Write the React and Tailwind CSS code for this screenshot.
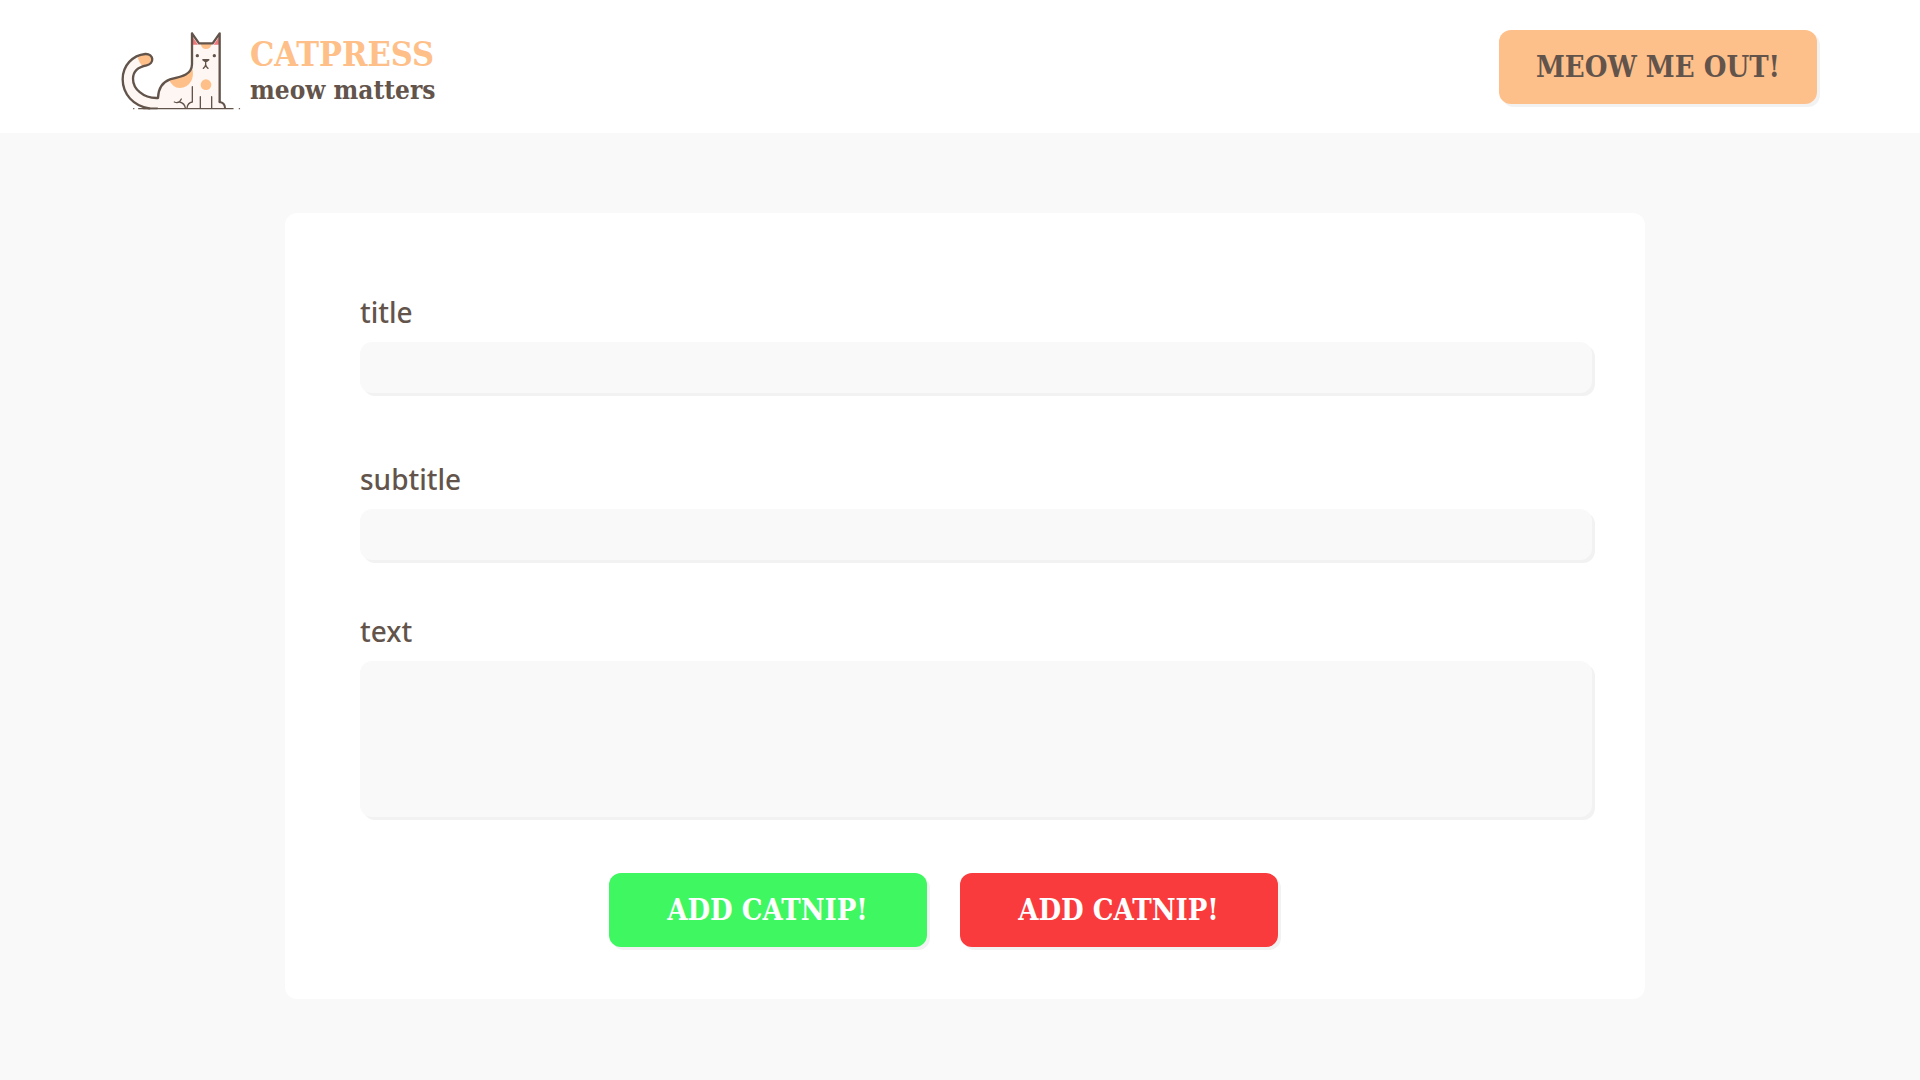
const slab = "font-['DejaVu_Serif_Condensed','DejaVu_Serif',serif] font-bold";
const field =
  "block w-full rounded-xl bg-[#f9f9f9] px-4 text-2xl text-[#63544b] shadow-[3px_3px_0_#f2f2f2] outline-none";
const label = "text-[28px] leading-10 font-medium text-[#63544b]";
const button =
  "h-[74px] w-[318px] rounded-xl text-[29px] leading-10 shadow-[3px_3px_0_#f2f2f2] cursor-pointer";

function CatLogo() {
  return (
    <svg viewBox="30 30 366 246" className="h-[82px] w-[122px] shrink-0" fill="none" aria-hidden="true">
      <path
        d="M246 40 L267 69 H308 L329 40 V244 Q345 247 346 265 H110 C66 256 38 222 38 178 C38 136 68 106 106 102 C132 101 134 130 112 136 C84 140 69 155 69 176 C69 205 98 234 144 234 C145 204 158 186 180 177 C210 170 246 166 246 130 Z"
        fill="#fdf6f3"
      />
      <path d="M83 113 Q100 102 108 102 C130 103 131 126 114 134 L97 139 Q88 128 83 113 Z" fill="#fec088" />
      <path d="M177 179 Q208 173 225 166 Q242 157 247 146 Q252 165 244 182 Q233 203 209 204 Q188 203 177 179 Z" fill="#fec088" />
      <path d="M272 72 H305 Q302 87 288 87 Q275 87 272 72 Z" fill="#fec088" />
      <circle cx="288" cy="194" r="16" fill="#fec088" />
      <path d="M248 51 L264 74 H248 Z M327 51 L311 74 H327 Z" fill="#f0787c" />
      <g stroke="#63544b" strokeLinejoin="round" strokeLinecap="round">
        <path
          strokeWidth="7"
          d="M329 246 V40 L308 70 H267 L246 40 V132 C246 164 216 170 180 178 C158 186 145 204 144 234 C98 236 69 205 69 176 C69 155 84 141 110 136 C134 131 132 101 106 102 C68 106 38 136 38 178 C38 222 70 258 118 265"
        />
        <path strokeWidth="6" d="M329 246 Q344 248 345 263" />
        <path strokeWidth="4" d="M86 266 H369" />
        <path strokeWidth="5" d="M100 265 H142" />
        <path strokeWidth="4" d="M71 266 h0.5 M388 266 h0.5" />
        <path strokeWidth="4" d="M271 230 V264 M305 230 V264 M247 200 V246 Q233 248 231 264 M193 246 Q202 250 209 245 L214 237 M209 246 Q224 250 226 264" />
        <path strokeWidth="4" d="M287 122 V135 M280 145 Q286 141 287 134 Q288 141 294 145" />
      </g>
      <path d="M277 117 H298 V121 L291 126 H284 L277 121 Z" fill="#63544b" />
      <circle cx="262" cy="107" r="5" fill="#63544b" />
      <circle cx="313" cy="107" r="5" fill="#63544b" />
    </svg>
  );
}

export default function App() {
  return (
    <div className="flex min-h-screen flex-col bg-[#f9f9f9] font-['Noto_Sans','Open_Sans',sans-serif]">
      <header className="flex min-h-[133px] items-start justify-between bg-white pt-[30px] pr-[103px] pl-[120px]">
        <a href="#" className="flex items-start gap-2">
          <CatLogo />
          <span className={`flex flex-col pt-1 ${slab}`}>
            <span className="text-[34px] leading-10 text-[#fec088]">CATPRESS</span>
            <span className="text-[26px] leading-8 text-[#63544b]">meow matters</span>
          </span>
        </a>
        <button type="button" className={`${button} ${slab} bg-[#fec08b] text-[#63544b]`}>
          MEOW ME OUT!
        </button>
      </header>

      <main className="pt-20 pr-[275px] pb-20 pl-[285px]">
        <form className="rounded-xl bg-white pt-[79px] pr-[53px] pb-[52px] pl-[75px]" onSubmit={(e) => e.preventDefault()}>
          <div className="flex flex-col items-start gap-2.5">
            <label htmlFor="title" className={label}>title</label>
            <input id="title" type="text" className={`${field} h-[51px]`} />
          </div>
          <div className="mt-[66px] flex flex-col items-start gap-2.5">
            <label htmlFor="subtitle" className={label}>subtitle</label>
            <input id="subtitle" type="text" className={`${field} h-[51px]`} />
          </div>
          <div className="mt-[51px] flex flex-col items-start gap-2.5">
            <label htmlFor="text" className={label}>text</label>
            <textarea id="text" className={`${field} h-[156px] resize-none py-3`} />
          </div>
          <div className="mt-14 flex justify-center gap-[33px] pr-[66px]">
            <button type="submit" className={`${button} ${slab} bg-[#3ff761] text-white`}>
              ADD CATNIP!
            </button>
            <button type="button" className={`${button} ${slab} bg-[#f93b3d] text-white`}>
              ADD CATNIP!
            </button>
          </div>
        </form>
      </main>
    </div>
  );
}
